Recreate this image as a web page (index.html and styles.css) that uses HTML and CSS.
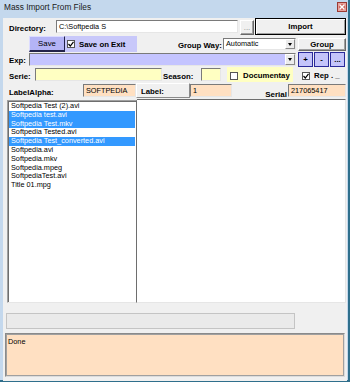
FILE: index.html
```html
<!DOCTYPE html>
<html lang="en">
<head>
  <meta charset="UTF-8">
  <title>Mass Import From Files</title>
  <link rel="stylesheet" href="styles.css">
</head>
<body>
  <div class="window">
    <div class="titlebar">
      <span class="title">Mass Import From Files</span>
      <span class="close">
        <svg width="6" height="6" viewBox="0 0 6 6"><path d="M0.5 0.5 L5.5 5.5 M5.5 0.5 L0.5 5.5" stroke="#fff" stroke-width="1.4"/></svg>
      </span>
    </div>

    <div class="client">
      <!-- directory -->
      <div class="row row-dir">
        <span class="lbl lbl-dir">Directory:</span>
        <div class="field field-dir">C:\Softpedia S</div>
        <button class="btn btn-browse">...</button>
        <button class="btn btn-import">Import</button>
      </div>

      <!-- save / group -->
      <div class="row row-save">
        <button class="btn-save">Save</button>
        <div class="save-exit"><span class="chk"><svg width="6" height="6" viewBox="0 0 6 6"><path d="M0.5 3 L2.3 5 L5.5 0.8" fill="none" stroke="#000" stroke-width="1.2"/></svg></span>Save on Exit</div>
        <span class="lbl lbl-way">Group Way:</span>
        <div class="combo combo-way">Automatic<span class="arrow"></span></div>
        <button class="btn btn-group">Group</button>
      </div>

      <!-- exp -->
      <div class="row row-exp">
        <span class="lbl lbl-exp">Exp:</span>
        <div class="combo combo-exp"><span class="arrow"></span></div>
        <button class="btn-lav">+</button>
        <button class="btn-lav">-</button>
        <button class="btn-lav">...</button>
      </div>

      <!-- serie -->
      <div class="row row-serie">
        <span class="lbl lbl-serie">Serie:</span>
        <div class="field field-serie"></div>
        <span class="lbl lbl-season">Season:</span>
        <div class="field field-season"></div>
        <div class="docu"><span class="chk"></span>Documentay</div>
        <div class="rep"><span class="chk"><svg width="6" height="6" viewBox="0 0 6 6"><path d="M0.5 3 L2.3 5 L5.5 0.8" fill="none" stroke="#000" stroke-width="1.2"/></svg></span>Rep . _</div>
      </div>

      <!-- labels -->
      <div class="row row-label">
        <span class="lbl lbl-alpha">LabelAlpha:</span>
        <div class="field peach field-alpha">SOFTPEDIA</div>
        <div class="label-panel">Label:</div>
        <div class="field peach field-num">1</div>
        <span class="lbl lbl-serial">Serial</span>
        <div class="field peach field-serial">217065417</div>
      </div>

      <!-- file lists -->
      <div class="lists">
        <ul class="list list-files">
          <li>Softpedia Test (2).avi</li>
          <li class="sel">Softpedia test.avi</li>
          <li class="sel">Softpedia Test.mkv</li>
          <li>Softpedia Tested.avi</li>
          <li class="sel">Softpedia Test_converted.avi</li>
          <li>Softpedia.avi</li>
          <li>Softpedia.mkv</li>
          <li>Softpedia.mpeg</li>
          <li>SoftpediaTest.avi</li>
          <li>Title 01.mpg</li>
        </ul>
        <ul class="list list-out"></ul>
      </div>

      <div class="progress"></div>
      <div class="status">Done</div>
    </div>
  </div>
</body>
</html>
```

FILE: styles.css
```css
* {
  box-sizing: border-box;
}
body {
  margin: 0;
  font-family: "Liberation Sans", Arial, sans-serif;
  font-size: 7.3px;
  color: #000;
}
.window {
  width: 350px;
  height: 382px;
  background: #c4d8ed;
  border-right: 2px solid #2f6f8c;
  border-bottom: 2px solid #2f6f8c;
}
.titlebar {
  height: 14px;
  display: flex;
  align-items: center;
  justify-content: space-between;
  padding: 0 1px 0 4px;
}
.title {
  font-size: 8.3px;
  color: #1a1a1a;
}
.close {
  width: 10px;
  height: 10px;
  display: flex;
  align-items: center;
  justify-content: center;
  background: #d06a62;
  border: 1px solid #9b3a34;
  box-shadow: inset 0 0 0 1px #e8a09a;
}
.client {
  margin-left: 3px;
  width: 344px;
  height: 363px;
  background: #f0f0f0;
}
.row {
  display: flex;
  align-items: center;
}
.lbl {
  font-weight: bold;
  font-size: 7.8px;
  white-space: nowrap;
}
.field {
  height: 13px;
  background: #fff;
  border: 1px solid;
  border-color: #7a7a7a #e6e6e6 #e6e6e6 #7a7a7a;
  padding: 1px 2px 0;
  line-height: 9px;
  white-space: nowrap;
  overflow: hidden;
}
.peach {
  background: #ffe0c2;
}
.btn {
  font-family: inherit;
  font-size: 7.8px;
  font-weight: bold;
  padding: 0;
  color: #000;
  background: #f0f0f0;
  border: 1px solid;
  border-color: #fff #696969 #696969 #fff;
  box-shadow: inset -1px -1px #a0a0a0;
}
.chk {
  width: 8px;
  height: 8px;
  flex: none;
  background: #fff;
  border: 1px solid #555;
  display: inline-flex;
  align-items: center;
  justify-content: center;
}

/* directory row */
.row-dir {
  height: 17px;
  margin-top: 4px;
}
.lbl-dir {
  width: 53px;
  padding: 3px 0 0 6px;
}
.field-dir {
  width: 182px;
}
.btn-browse {
  width: 14px;
  height: 15px;
  margin-left: 2px;
  align-self: flex-end;
  font-weight: normal;
  color: #888;
}
.btn-import {
  width: 91px;
  height: 17px;
  margin-left: 1px;
  border: 1px solid #000;
  box-shadow: inset 1px 1px #fff, inset -1px -1px #a0a0a0;
}

/* save row */
.row-save {
  height: 16px;
  margin-top: 1px;
}
.btn-save {
  width: 36px;
  height: 16px;
  margin-left: 26px;
  padding: 0;
  font-family: inherit;
  font-size: 7.8px;
  color: #000;
  background: #b4b4f6;
  border: 1px solid;
  border-color: #dcdcff #22224a #22224a #dcdcff;
  border-bottom-width: 2px;
}
.save-exit {
  width: 72px;
  height: 16px;
  display: flex;
  align-items: center;
  gap: 4px;
  padding-left: 2px;
  background: #c8c8fa;
  font-weight: bold;
  font-size: 7.8px;
}
.lbl-way {
  width: 45px;
  margin-left: 41px;
  padding-top: 2px;
}
.combo {
  height: 12px;
  position: relative;
  background: #fff;
  border: 1px solid;
  border-color: #7a7a7a #e6e6e6 #e6e6e6 #7a7a7a;
  padding: 0 2px;
  line-height: 10px;
}
.combo .arrow {
  position: absolute;
  right: 0;
  top: 0;
  width: 10px;
  height: 10px;
  background: #ececec;
  border: 1px solid;
  border-color: #fff #8a8a8a #8a8a8a #fff;
}
.combo .arrow::after {
  content: "";
  position: absolute;
  left: 2px;
  top: 3px;
  border-left: 2.5px solid transparent;
  border-right: 2.5px solid transparent;
  border-top: 3px solid #000;
}
.combo-way {
  width: 73px;
}
.btn-group {
  width: 48px;
  height: 13px;
  margin-left: 2px;
}

/* exp row */
.row-exp {
  height: 14px;
}
.lbl-exp {
  width: 26px;
  padding: 3px 0 0 6px;
}
.combo-exp {
  width: 267px;
  height: 13px;
  background: #c4c4ff;
}
.combo-exp .arrow {
  height: 11px;
}
.btn-lav {
  width: 15px;
  height: 15px;
  margin-left: 1px;
  padding: 0;
  font-family: inherit;
  font-size: 7.8px;
  font-weight: bold;
  color: #000;
  background: #c4c4fa;
  border: 1px solid #2a2a9a;
}
.btn-lav:first-of-type {
  margin-left: 2px;
}

/* serie row */
.row-serie {
  height: 15px;
  margin-top: 1px;
}
.lbl-serie {
  width: 32px;
  padding: 3px 0 0 6px;
}
.field-serie {
  width: 127px;
  background: #ffffc2;
}
.lbl-season {
  width: 39px;
  padding: 3px 0 0 1px;
}
.field-season {
  width: 20px;
  background: #ffffc2;
}
.docu {
  width: 66px;
  height: 15px;
  margin-left: 6px;
  display: flex;
  align-items: center;
  gap: 5px;
  padding: 2px 0 0 3px;
  background: #ffffc2;
  font-weight: bold;
  font-size: 7.8px;
}
.rep {
  margin-left: 9px;
  display: flex;
  align-items: center;
  gap: 4px;
  padding-top: 2px;
  font-weight: bold;
  font-size: 7.8px;
  white-space: nowrap;
}

/* label row */
.row-label {
  height: 15px;
  margin-top: 1px;
}
.lbl-alpha {
  width: 80px;
  padding: 4px 0 0 6px;
}
.field-alpha {
  width: 53px;
}
.label-panel {
  width: 54px;
  height: 15px;
  padding: 3px 0 0 4px;
  font-weight: bold;
  font-size: 7.8px;
  border: 1px solid;
  border-color: #fff #8a8a8a #8a8a8a #fff;
}
.field-num {
  width: 42px;
}
.lbl-serial {
  width: 56px;
  text-align: right;
  padding: 7px 1px 0 0;
  font-size: 8px;
}
.field-serial {
  width: 58px;
}

/* lists */
.lists {
  display: flex;
  height: 204px;
  margin-top: 1px;
}
.list {
  margin: 0;
  padding: 0;
  list-style: none;
  background: #fff;
}
.list-files {
  width: 130px;
  margin: 1px 0 0 4px;
  padding: 1px 1px 0 1px;
  border: 1px solid;
  border-color: #a0a0a0 #6e6e6e #e6e6e6 #a0a0a0;
  box-shadow: inset 1px 1px #6e6e6e;
}
.list-files li {
  height: 8.8px;
  line-height: 8.8px;
  padding-left: 2px;
  white-space: nowrap;
  color: #000;
}
.list-files li.sel {
  background: #3399ff;
  color: #fff;
}
.list-out {
  width: 209px;
  border: 1px solid;
  border-color: #6e6e6e #e6e6e6 #e6e6e6 #6e6e6e;
  border-left: none;
}

.progress {
  width: 289px;
  height: 16px;
  margin: 10px 0 0 3px;
  background: #eaeaea;
  border: 1px solid #c4c4c4;
}
.status {
  width: 340px;
  height: 44px;
  margin: 4px 0 0 2px;
  padding: 3px 2px;
  background: #ffe0c2;
  border: 1px solid;
  border-color: #8a8a8a #dcdcdc #dcdcdc #8a8a8a;
  box-shadow: inset 1px 1px #a0a0a0, inset -1px -1px #a0a0a0;
}
```
